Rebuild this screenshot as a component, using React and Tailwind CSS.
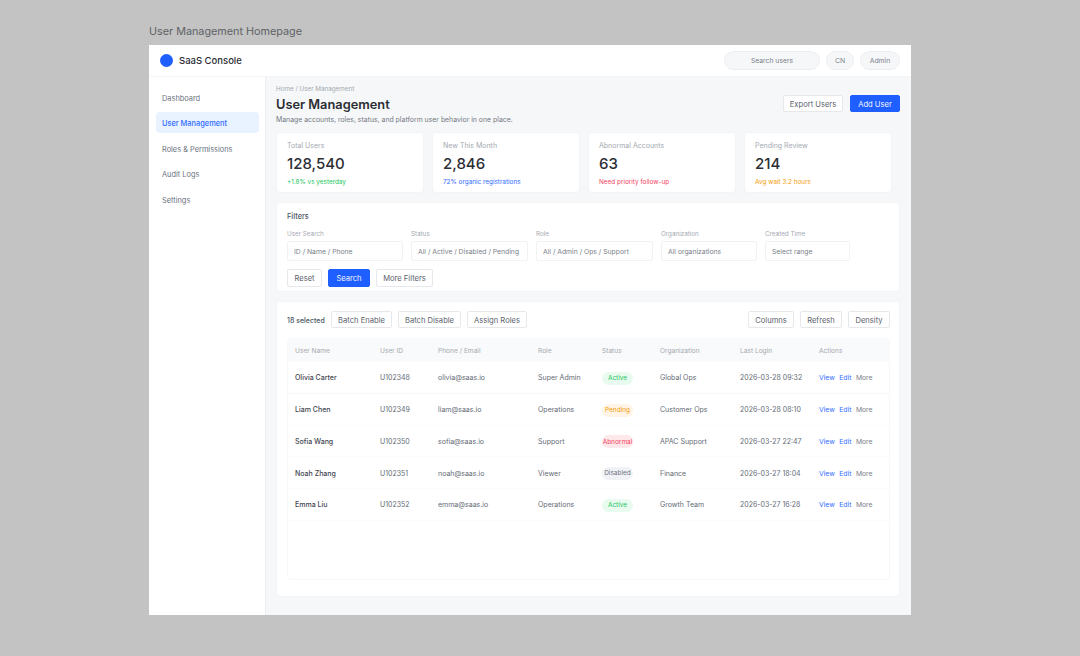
const nav = ["Dashboard", "User Management", "Roles & Permissions", "Audit Logs", "Settings"];
const stats = [
  ["Total Users", "128,540", "+1.8% vs yesterday", "text-[#22c55e]"],
  ["New This Month", "2,846", "72% organic registrations", "text-[#2f6bff]"],
  ["Abnormal Accounts", "63", "Need priority follow-up", "text-[#f43f5e]"],
  ["Pending Review", "214", "Avg wait 3.2 hours", "text-[#f59e0b]"],
];
const filters = [
  ["User Search", "ID / Name / Phone", "w-[116px]"],
  ["Status", "All / Active / Disabled / Pending", "w-[117px]"],
  ["Role", "All / Admin / Ops / Support", "w-[117px]"],
  ["Organization", "All organizations", "w-[96px]"],
  ["Created Time", "Select range", "w-[85px]"],
];
const badge = {
  Active: "bg-[#e9fbef] text-[#22c55e]",
  Pending: "bg-[#fff4e5] text-[#f59e0b]",
  Abnormal: "bg-[#ffe8ea] text-[#f43f5e]",
  Disabled: "bg-[#f0f2f5] text-[#6b7280]",
};
const rows = [
  ["Olivia Carter", "U102348", "olivia@saas.io", "Super Admin", "Active", "Global Ops", "2026-03-28 09:32"],
  ["Liam Chen", "U102349", "liam@saas.io", "Operations", "Pending", "Customer Ops", "2026-03-28 08:10"],
  ["Sofia Wang", "U102350", "sofia@saas.io", "Support", "Abnormal", "APAC Support", "2026-03-27 22:47"],
  ["Noah Zhang", "U102351", "noah@saas.io", "Viewer", "Disabled", "Finance", "2026-03-27 18:04"],
  ["Emma Liu", "U102352", "emma@saas.io", "Operations", "Active", "Growth Team", "2026-03-27 16:28"],
];
const cols = "grid grid-cols-[85px_58px_100px_64px_58px_80px_79px_1fr] items-center pl-[7px]";

function Btn({ children, w, primary, tall }) {
  return (
    <button className={`${w} ${tall ? "h-[18px] pt-[1px]" : "h-[17px] pt-[2px]"} flex items-center justify-center rounded-[2px] border text-[7.6px] ${primary ? "border-[#1f5eff] bg-[#1f5eff] text-[#f3f6ff]" : "border-[#e6e8ec] bg-white text-[#5b626c]"}`}>
      {children}
    </button>
  );
}

export default function App() {
  return (
    <div className="h-[656px] w-[1080px] overflow-hidden bg-[#c3c3c3] pt-[25px] pl-[149px] font-['Inter',sans-serif]">
      <div className="flex h-[20px] items-start text-[10.8px] leading-[14px] text-[#5f6265]">User Management Homepage</div>
      <div className="flex h-[570px] w-[762px] flex-col bg-white">
        <header className="flex h-[32px] shrink-0 items-center border-b border-[#f2f4f6] pr-[11px] pl-[11px]">
          <div className="h-[13px] w-[13px] rounded-full bg-[#1f5eff]" />
          <div className="ml-[6px] pt-[1px] text-[9.5px] font-medium text-[#2b2e33]">SaaS Console</div>
          <div className="ml-auto flex gap-[6px]">
            <div className="flex h-[19px] w-[96px] items-center justify-center rounded-full border border-[#eceef1] bg-[#f5f7f9] pt-[1px] text-[6.8px] text-[#7b818a]">Search users</div>
            <div className="flex h-[19px] w-[28px] items-center justify-center rounded-full border border-[#eceef1] bg-[#f5f7f9] pt-[1px] text-[6.8px] text-[#7b818a]">CN</div>
            <div className="flex h-[19px] w-[40px] items-center justify-center rounded-full border border-[#eceef1] bg-[#f5f7f9] pt-[1px] text-[6.8px] text-[#7b818a]">Admin</div>
          </div>
        </header>
        <div className="flex min-h-0 flex-1">
          <aside className="flex w-[117px] shrink-0 flex-col gap-[4.4px] border-r border-[#eceef1] pt-[10px] pr-[6px] pl-[7px]">
            {nav.map((n) => (
              <div key={n} className={`flex h-[21px] items-center rounded-[4px] px-[6px] pt-[2px] text-[7.4px] ${n === "User Management" ? "bg-[#e9f2ff] font-medium text-[#2f6bff]" : "text-[#6b7280]"}`}>{n}</div>
            ))}
          </aside>
          <main className="min-w-0 flex-1 bg-[#f5f7f9] pt-[8px] pr-[11px] pl-[10px]">
            <div className="text-[6.3px] leading-[8px] text-[#a4a9b0]">Home / User Management</div>
            <div className="flex items-start justify-between">
              <div>
                <h1 className="mt-[4px] text-[12.8px] leading-[16px] font-semibold text-[#2b2e33]">User Management</h1>
                <p className="mt-[2px] text-[6.9px] leading-[10px] text-[#747a83]">Manage accounts, roles, status, and platform user behavior in one place.</p>
              </div>
              <div className="mt-[2px] flex gap-[7px]">
                <Btn w="w-[60px]">Export Users</Btn>
                <Btn w="w-[50px]" primary>Add User</Btn>
              </div>
            </div>
            <div className="mt-[7px] flex gap-[8px]">
              {stats.map(([a, b, c, d]) => (
                <div key={a} className="h-[61px] w-[148px] rounded-[4px] border border-[#f2f4f6] bg-white pt-[8px] pl-[10px]">
                  <div className="text-[7px] leading-[9px] text-[#a4a9b0]">{a}</div>
                  <div className="mt-[4px] text-[15px] leading-[20px] font-medium text-[#2b2e33]">{b}</div>
                  <div className={`mt-[4px] text-[6.4px] leading-[9px] ${d}`}>{c}</div>
                </div>
              ))}
            </div>
            <section className="mt-[9px] h-[90px] rounded-[4px] border border-[#f2f4f6] bg-white pt-[9px] pl-[10px]">
              <div className="text-[7.4px] leading-[10px] font-medium text-[#4b5563]">Filters</div>
              <div className="mt-[7px] flex gap-[8px]">
                {filters.map(([l, v, w]) => (
                  <div key={l} className={w}>
                    <div className="pt-[1px] text-[6.3px] leading-[8px] text-[#a4a9b0]">{l}</div>
                    <div className="mt-[3px] flex h-[20px] items-center rounded-[2px] border border-[#f0f2f4] pt-[2px] pl-[6px] text-[6.8px] whitespace-nowrap text-[#7b818a]">{v}</div>
                  </div>
                ))}
              </div>
              <div className="mt-[8px] flex gap-[6px]">
                <Btn w="w-[35px]" tall>Reset</Btn>
                <Btn w="w-[42px]" tall primary>Search</Btn>
                <Btn w="w-[57px]" tall>More Filters</Btn>
              </div>
            </section>
            <section className="mt-[9px] h-[296px] rounded-[4px] border border-[#f2f4f6] bg-white pt-[9px] pr-[9px] pl-[10px]">
              <div className="flex items-center">
                <span className="w-[44px] pt-[2px] text-[7px] leading-[10px] font-medium text-[#4b5563]">18 selected</span>
                <div className="flex gap-[6px]">
                  <Btn w="w-[61px]">Batch Enable</Btn>
                  <Btn w="w-[63px]">Batch Disable</Btn>
                  <Btn w="w-[60px]">Assign Roles</Btn>
                </div>
                <div className="ml-auto flex gap-[6px]">
                  <Btn w="w-[46px]">Columns</Btn>
                  <Btn w="w-[42px]">Refresh</Btn>
                  <Btn w="w-[42px]">Density</Btn>
                </div>
              </div>
              <div className="mt-[10px] h-[242px] rounded-[4px] border border-[#f7f8fa]">
                <div className={`${cols} h-[23px] rounded-t-[4px] bg-[#f9fafb] pt-[2px] text-[6.6px] text-[#a4a9b0]`}>
                  {["User Name", "User ID", "Phone / Email", "Role", "Status", "Organization", "Last Login", "Actions"].map((h) => <div key={h}>{h}</div>)}
                </div>
                {rows.map((r, i) => (
                  <div key={r[1]} className={`${cols} h-[31.8px] pt-[2px] text-[7px] text-[#646b75] ${i === 0 ? "border-b border-[#f5f6f8]" : "border-b border-[#fbfbfc]"}`}>
                    <div className="font-medium text-[#3f4650]">{r[0]}</div>
                    <div>{r[1]}</div>
                    <div>{r[2]}</div>
                    <div>{r[3]}</div>
                    <div><span className={`inline-flex h-[13px] w-[31px] items-center justify-center rounded-full pt-[1px] text-[6.5px] ${badge[r[4]]}`}>{r[4]}</span></div>
                    <div>{r[5]}</div>
                    <div className="whitespace-nowrap">{r[6]}</div>
                    <div className="flex gap-[4.5px] text-[6.8px]">
                      <span className="text-[#2f6bff]">View</span>
                      <span className="text-[#2f6bff]">Edit</span>
                      <span className="text-[#7b818a]">More</span>
                    </div>
                  </div>
                ))}
              </div>
            </section>
          </main>
        </div>
      </div>
    </div>
  );
}
